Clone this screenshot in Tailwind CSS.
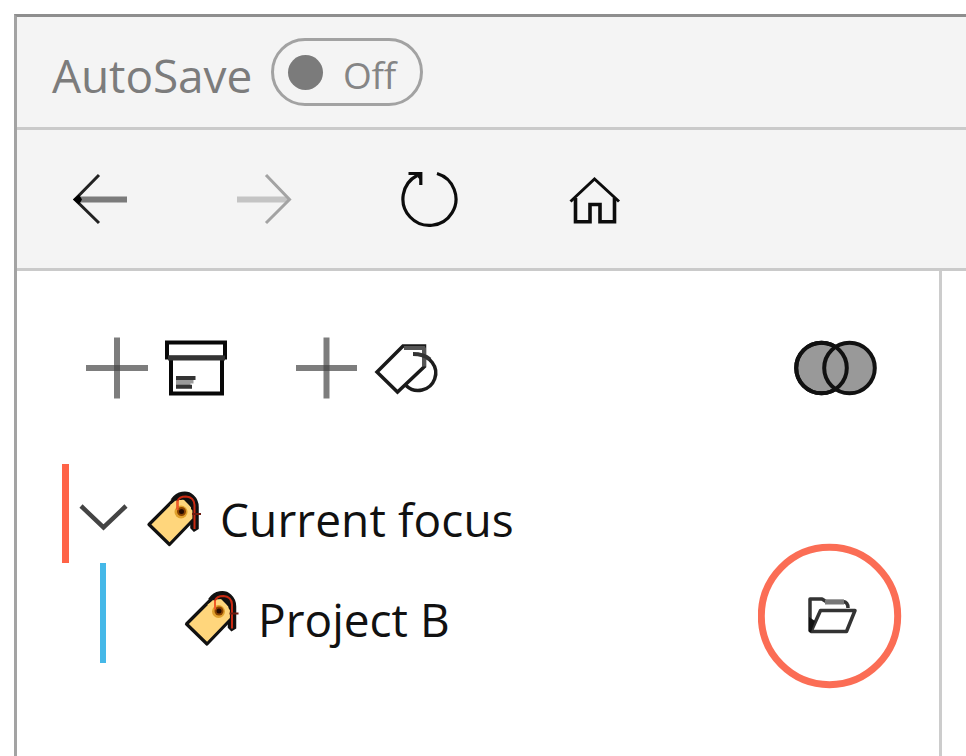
<!DOCTYPE html>
<html lang="en">
<head>
<meta charset="utf-8">
<title>Library</title>
<script src="https://cdn.jsdelivr.net/npm/@tailwindcss/browser@4"></script>
</head>
<body class="bg-white">
<div class="h-[756px] w-[966px] overflow-hidden bg-white pl-[14px] pt-[14px] font-['Open_Sans','Noto_Sans',sans-serif]">
  <div class="flex h-[742px] flex-col border-l-3 border-t-3 border-l-[#a3a3a3] border-t-[#8e8e8e]">
    <header class="flex h-[113px] shrink-0 items-start border-b-3 border-[#cacaca] bg-[#f4f4f4] pl-[35px]">
      <span class="mt-[27px] w-[219px] whitespace-nowrap text-[46px] leading-[62px] tracking-[-0.1px] text-[#7c7c7c]">AutoSave</span>
      <div class="mt-[21px] flex h-[68px] w-[152px] items-center rounded-full border-3 border-[#a2a2a2] pl-[14px]">
        <span class="size-[35px] rounded-full bg-[#7b7b7b]"></span>
        <span class="ml-[20px] mt-[5px] text-[37px] leading-[50px] tracking-[-0.3px] text-[#858585]">Off</span>
      </div>
    </header>
    <nav class="flex h-[141px] shrink-0 items-center border-b-3 border-[#cacaca] bg-[#f4f4f4] pl-[53px]">
      <svg class="h-[60px] w-[60px]" viewBox="70 169 60 60" fill="none"><path d="M76 199.500H127" stroke="#7b7b7b" stroke-width="6"/><path d="M99 175L75 199.500L99 223" stroke="#222" stroke-width="3"/><path d="M73 199.500l6-5 3 5-3 5z" fill="#000"/></svg>
      <svg class="ml-[104px] h-[60px] w-[60px]" viewBox="234 169 60 60" fill="none"><path d="M237 199.500H288" stroke="#c4c4c4" stroke-width="6"/><path d="M266 175L289.500 199.500L266 223" stroke="#a3a3a3" stroke-width="3"/></svg>
      <svg class="ml-[106px] h-[60px] w-[60px]" viewBox="401 169 60 60" fill="none" stroke="#0c0c0c" stroke-width="3.200"><path d="M438 173.500A26.500 26.500 0 1 1 418 175.500"/><path d="M409.500 173.500H421.800V185"/><path d="M415 173L422 173V181z" fill="#0c0c0c" stroke="none"/></svg>
      <svg class="ml-[106px] h-[60px] w-[60px]" viewBox="566 169 60 60" fill="none" stroke="#0c0c0c"><path d="M570.500 201.500L594.500 179L619 201.500" stroke-width="3"/><path d="M575.500 198V221.800H590V204.500H600V221.800H614.500V198" stroke-width="3.600"/></svg>
    </nav>
    <div class="flex min-h-0 grow">
      <aside class="w-[925px] shrink-0 border-r-3 border-[#cccccc]">
        <div class="flex h-[193px] items-center pl-[65px]">
          <svg class="h-[70px] w-[150px]" viewBox="82 332.500 150 70" fill="none"><g stroke="#7d7d7d" stroke-width="6"><path d="M86 367.500H148"/><path d="M117 337V398"/></g><path d="M114 364.500h6v6h-6z" fill="#555"/><g stroke="#080808" stroke-width="4"><path d="M167 342H225V357H167z"/><path d="M171 357V393H222V357"/></g><path d="M168 357.500H225" stroke="#333" stroke-width="5"/><path d="M176 379H193.500V383H190.500V386H176z" fill="#999"/><path d="M176 377.500H195.500M176 386.200H192" stroke="#333" stroke-width="4"/></svg>
          <svg class="ml-[58px] h-[70px] w-[150px]" viewBox="290 332.500 150 70" fill="none"><g stroke="#7d7d7d" stroke-width="6"><path d="M296 367.500H357"/><path d="M326.500 337V398"/></g><path d="M323.500 364.500h6v6h-6z" fill="#555"/><path d="M417 355A17.500 17.500 0 1 1 406 385" stroke="#1c1c1c" stroke-width="3.500"/><path d="M403 345.500H424.500V366L397.500 391.500L377 371.500z" fill="#fff" stroke="#1a1a1a" stroke-width="3.500"/><path d="M404 347.500H425M424 347V366" stroke="#555" stroke-width="4"/><path d="M413 353.500C421 353.500 426 355.500 430 359" stroke="#333" stroke-width="4"/></svg>
          <svg class="ml-[350px] h-[70px] w-[90px]" viewBox="790 332.500 90 70"><g fill="#999" stroke="#111" stroke-width="4"><circle cx="821.500" cy="367.500" r="25.300"/><circle cx="849.500" cy="367.500" r="25.300"/><circle cx="821.500" cy="367.500" r="25.300" fill="none"/></g></svg>
        </div>
        <div class="flex h-[99px] items-start pl-[45px]">
          <span class="h-[99px] w-[7px] bg-[#ff6347]"></span>
          <svg class="ml-[8px] h-[99px] w-[54px]" viewBox="77 464 54 99" fill="none"><path d="M81 506L103.500 527.500L126 506" stroke="#444" stroke-width="4.500"/></svg>
          <svg class="ml-[13px] h-[99px] w-[62px]" viewBox="144 464 62 99" fill="none"><path d="M172 499C177 492 187 490 193 495.500Q198 500 198 507V528.500L194 531L191 528V514L182 499z" fill="#111" stroke="#111" stroke-width="1.500"/><path d="M174 499.500L184 498L194 510V519L169.500 544.500L149 524.500z" fill="#ffd67c" stroke="#111" stroke-width="3.200" stroke-linejoin="round"/><path d="M178 500H184L191 507V518L184 524L170 505z" fill="#ffd67c"/><path d="M184 497.500L191 496L197 504V514L193 510z" fill="#111"/><circle cx="181" cy="512" r="6.500" fill="#e0a02c"/><circle cx="181.500" cy="511.500" r="4.500" fill="#8a4300"/><circle cx="181.500" cy="511.500" r="2.500" fill="#240a00"/><path d="M177.500 509V501Q179 496.500 186 496.500Q194 497 194.500 505V529" stroke="#c92a12" stroke-width="2"/><path d="M177.500 501V510" stroke="#f05a28" stroke-width="2"/><path d="M192 514H201" stroke="#6b1c10" stroke-width="2"/></svg>
          <span class="ml-[14px] mt-[24px] whitespace-nowrap text-[46px] leading-[62px] tracking-[0.100px] text-[#111]">Current focus</span>
        </div>
        <div class="relative flex h-[100px] items-start pl-[83px]">
          <span class="h-[100px] w-[6px] bg-[#45b8e8]"></span>
          <svg class="ml-[76px] h-[100px] w-[62px]" viewBox="144.500 463.500 62 100" fill="none"><path d="M172 499C177 492 187 490 193 495.500Q198 500 198 507V528.500L194 531L191 528V514L182 499z" fill="#111" stroke="#111" stroke-width="1.500"/><path d="M174 499.500L184 498L194 510V519L169.500 544.500L149 524.500z" fill="#ffd67c" stroke="#111" stroke-width="3.200" stroke-linejoin="round"/><path d="M178 500H184L191 507V518L184 524L170 505z" fill="#ffd67c"/><path d="M184 497.500L191 496L197 504V514L193 510z" fill="#111"/><circle cx="181" cy="512" r="6.500" fill="#e0a02c"/><circle cx="181.500" cy="511.500" r="4.500" fill="#8a4300"/><circle cx="181.500" cy="511.500" r="2.500" fill="#240a00"/><path d="M177.500 509V501Q179 496.500 186 496.500Q194 497 194.500 505V529" stroke="#c92a12" stroke-width="2"/><path d="M177.500 501V510" stroke="#f05a28" stroke-width="2"/><path d="M192 514H201" stroke="#6b1c10" stroke-width="2"/></svg>
          <span class="ml-[14px] mt-[25px] whitespace-nowrap text-[46px] leading-[62px] text-[#111]">Project B</span>
          <svg class="absolute left-[741px] top-[-20px] h-[146px] w-[144px]" viewBox="758 543 144 146" fill="none"><ellipse cx="829.500" cy="616" rx="68.200" ry="68.700" stroke="#fb6d55" stroke-width="7"/><g stroke="#333" stroke-width="3.500" stroke-linejoin="round"><path d="M810 631.500V599H822L826 601.500H843Q848 602 848 608"/><path d="M820.500 610.500H855L846.500 631.500H811z"/></g><path d="M809 617L815 621L811 632H809z" fill="#111"/><path d="M825 602H844" stroke="#777" stroke-width="5"/></svg>
        </div>
      </aside>
    </div>
  </div>
</div>
</body>
</html>
